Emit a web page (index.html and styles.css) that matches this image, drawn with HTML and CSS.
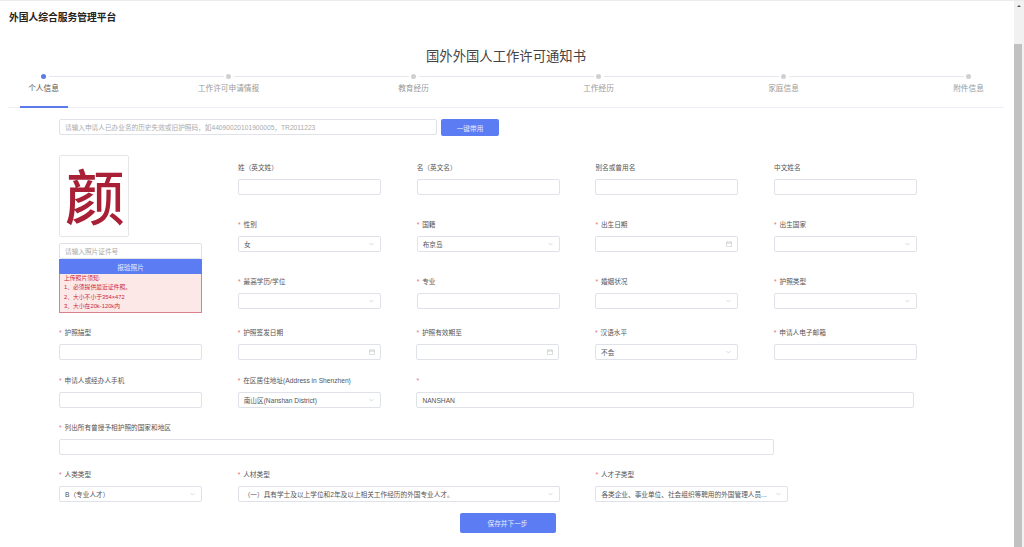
FILE: index.html
```html
<!DOCTYPE html>
<html lang="zh-CN">
<head>
<meta charset="UTF-8">
<meta name="viewport" content="width=device-width, initial-scale=1.0">
<title>外国人综合服务管理平台</title>
<link rel="stylesheet" href="styles.css">
</head>
<body>
<div class="app">
  <div class="page">
    <div class="header">外国人综合服务管理平台</div>
    <h1 class="page-title">国外外国人工作许可通知书</h1>

    <div class="steps">
      <div class="step active"><span class="dot"></span><span class="step-name">个人信息</span></div>
      <div class="step"><span class="dot"></span><span class="step-name">工作许可申请情报</span></div>
      <div class="step"><span class="dot"></span><span class="step-name">教育经历</span></div>
      <div class="step"><span class="dot"></span><span class="step-name">工作经历</span></div>
      <div class="step"><span class="dot"></span><span class="step-name">家庭信息</span></div>
      <div class="step"><span class="dot"></span><span class="step-name">附件信息</span></div>
    </div>

    <div class="form">
      <div class="search-row">
        <input class="input search-input" placeholder="请输入申请人已办业务的历史失效或旧护照码，如44090020101900005，TR2011223">
        <button class="btn btn-small">一键带用</button>
      </div>

      <div class="top-row">
        <div class="photo-col">
          <div class="photo"><span class="photo-char">颜</span></div>
          <input class="input photo-input" placeholder="请输入照片证件号">
          <button class="btn upload-btn">报验照片</button>
          <div class="notice">
            <div>上传照片须知:</div>
            <div>1、必须提供最近证件照。</div>
            <div>2、大小不小于354×472</div>
            <div>3、大小在20k-120k内</div>
          </div>
        </div>

        <div class="top-fields">
          <div class="field"><label class="label">姓（英文姓）</label><input class="input"></div>
          <div class="field"><label class="label">名（英文名）</label><input class="input"></div>
          <div class="field"><label class="label">别名或曾用名</label><input class="input"></div>
          <div class="field"><label class="label">中文姓名</label><input class="input"></div>

          <div class="field"><label class="label req">性别</label>
            <div class="input select"><span class="value">女</span><svg class="chevron" viewBox="0 0 6 4"><path d="M.5.7 3 3.3 5.5.7"/></svg></div></div>
          <div class="field"><label class="label req">国籍</label>
            <div class="input select"><span class="value">布京岛</span><svg class="chevron" viewBox="0 0 6 4"><path d="M.5.7 3 3.3 5.5.7"/></svg></div></div>
          <div class="field"><label class="label req">出生日期</label>
            <div class="input select"><span class="value"></span><svg class="calendar" viewBox="0 0 7 7"><path d="M.5 1.2h6v5.3h-6zM.5 2.6h6M2 .3v1.4M5 .3v1.4"/></svg></div></div>
          <div class="field"><label class="label req">出生国家</label>
            <div class="input select"><span class="value"></span><svg class="chevron" viewBox="0 0 6 4"><path d="M.5.7 3 3.3 5.5.7"/></svg></div></div>

          <div class="field"><label class="label req">最高学历/学位</label>
            <div class="input select"><span class="value"></span><svg class="chevron" viewBox="0 0 6 4"><path d="M.5.7 3 3.3 5.5.7"/></svg></div></div>
          <div class="field"><label class="label req">专业</label><input class="input"></div>
          <div class="field"><label class="label req">婚姻状况</label>
            <div class="input select"><span class="value"></span><svg class="chevron" viewBox="0 0 6 4"><path d="M.5.7 3 3.3 5.5.7"/></svg></div></div>
          <div class="field"><label class="label req">护照类型</label>
            <div class="input select"><span class="value"></span><svg class="chevron" viewBox="0 0 6 4"><path d="M.5.7 3 3.3 5.5.7"/></svg></div></div>
        </div>
      </div>

      <div class="form-row row-4">
        <div class="field"><label class="label req">护照描型</label><input class="input"></div>
        <div class="field"><label class="label req">护照签发日期</label>
          <div class="input select"><span class="value"></span><svg class="calendar" viewBox="0 0 7 7"><path d="M.5 1.2h6v5.3h-6zM.5 2.6h6M2 .3v1.4M5 .3v1.4"/></svg></div></div>
        <div class="field"><label class="label req">护照有效期至</label>
          <div class="input select"><span class="value"></span><svg class="calendar" viewBox="0 0 7 7"><path d="M.5 1.2h6v5.3h-6zM.5 2.6h6M2 .3v1.4M5 .3v1.4"/></svg></div></div>
        <div class="field"><label class="label req">汉语水平</label>
          <div class="input select"><span class="value">不会</span><svg class="chevron" viewBox="0 0 6 4"><path d="M.5.7 3 3.3 5.5.7"/></svg></div></div>
        <div class="field"><label class="label req">申请人电子邮箱</label><input class="input"></div>
      </div>

      <div class="form-row row-5">
        <div class="field"><label class="label req">申请人或经办人手机</label><input class="input"></div>
        <div class="field"><label class="label req">在区居住地址(Address in Shenzhen)</label>
          <div class="input select"><span class="value">南山区(Nanshan District)</span><svg class="chevron" viewBox="0 0 6 4"><path d="M.5.7 3 3.3 5.5.7"/></svg></div></div>
        <div class="field field-address"><label class="label req"></label><input class="input" value="NANSHAN"></div>
      </div>

      <div class="form-row row-6">
        <div class="field field-full"><label class="label req">列出所有曾授予相护照的国家和地区</label><input class="input"></div>
      </div>

      <div class="form-row row-7">
        <div class="field"><label class="label req">人类类型</label>
          <div class="input select"><span class="value">B（专业人才）</span><svg class="chevron" viewBox="0 0 6 4"><path d="M.5.7 3 3.3 5.5.7"/></svg></div></div>
        <div class="field field-talent"><label class="label req">人材类型</label>
          <div class="input select"><span class="value">（一）具有学士及以上学位和2年及以上相关工作经历的外国专业人才。</span><svg class="chevron" viewBox="0 0 6 4"><path d="M.5.7 3 3.3 5.5.7"/></svg></div></div>
        <div class="field field-sub"><label class="label req">人才子类型</label>
          <div class="input select"><span class="value">各类企业、事业单位、社会组织等聘用的外国管理人员...</span><svg class="chevron" viewBox="0 0 6 4"><path d="M.5.7 3 3.3 5.5.7"/></svg></div></div>
      </div>

      <div class="save-row"><button class="btn save-btn">保存并下一步</button></div>
    </div>
  </div>

  <div class="scrollbar">
    <span class="arrow-up"></span>
    <div class="thumb"></div>
  </div>
</div>
</body>
</html>
```

FILE: styles.css
```css
* {
  box-sizing: border-box;
}

body {
  margin: 0;
  font-family: "Liberation Sans", "Noto Sans CJK SC", sans-serif;
  background: #fff;
  color: #606266;
}

.app {
  display: flex;
  height: 547px;
  overflow: hidden;
  border-top: 1px solid #ececec;
}

.page {
  flex: 1;
  min-width: 0;
  padding: 0 10px 0 8px;
}

.header {
  height: 33px;
  padding: 10px 1px 0;
  line-height: 13px;
  font-size: 9.75px;
  font-weight: bold;
  color: #222;
}

.page-title {
  margin: 12px 0 0;
  height: 28px;
  line-height: 21px;
  text-align: center;
  font-size: 13.33px;
  font-weight: normal;
  color: #444;
}

/* steps */
.steps {
  display: flex;
  justify-content: space-between;
  height: 34px;
  padding: 0 11.5px;
  border-bottom: 1px solid #ebeef5;
}

.step {
  position: relative;
  display: flex;
  flex-direction: column;
  align-items: center;
  width: 48px;
  height: 34px;
  color: #999;
}

.step:not(:last-child)::after {
  content: "";
  position: absolute;
  top: 2px;
  left: 29px;
  width: 175px;
  height: 1px;
  background: #e4e7ed;
}

.dot {
  width: 5px;
  height: 5px;
  border-radius: 50%;
  background: #d0d0d0;
}

.step-name {
  margin-top: 4px;
  line-height: 11px;
  font-size: 7.67px;
  white-space: nowrap;
}

.step.active {
  border-bottom: 2px solid #5b7bea;
  color: #555;
}

.step.active .dot {
  background: #5b7bea;
}

/* form */
.form {
  padding: 11px 0 0 51px;
}

.input {
  display: block;
  width: 100%;
  height: 16px;
  padding: 0 5px;
  border: 1px solid #dfe2e8;
  border-radius: 2px;
  background: #fff;
  outline: none;
  font-family: inherit;
  font-size: 6.67px;
  color: #555;
}

.input::placeholder {
  color: #aaa;
}

.select {
  display: flex;
  align-items: center;
  justify-content: space-between;
  gap: 4px;
}

.value {
  flex: 1;
  min-width: 0;
  overflow: hidden;
  white-space: nowrap;
}

.chevron {
  flex: none;
  width: 5px;
  height: 4px;
  margin-right: 1px;
  fill: none;
  stroke: #bbb;
  stroke-width: .6;
}

.calendar {
  flex: none;
  width: 6px;
  height: 6px;
  fill: none;
  stroke: #bbb;
  stroke-width: .6;
}

.btn {
  border: 0;
  border-radius: 2px;
  padding: 0;
  background: #5b7cf2;
  color: #e8ecfd;
  font-family: inherit;
  font-size: 6.67px;
}

.search-row {
  display: flex;
  gap: 4px;
}

.search-input {
  width: 378px;
}

.btn-small {
  width: 58px;
  height: 17px;
}

.top-row {
  display: flex;
  gap: 36px;
  margin-top: 19px;
}

.photo-col {
  flex: none;
  display: flex;
  flex-direction: column;
  width: 143px;
}

.photo {
  display: flex;
  justify-content: center;
  width: 70px;
  height: 82px;
  padding: 8px 0 0 2px;
  border: 1px solid #e6e6e6;
  border-radius: 2px;
}

.photo-char {
  font-family: "Noto Sans CJK SC", sans-serif;
  font-size: 60px;
  font-weight: 500;
  line-height: 1;
  color: #a81f36;
}

.photo-input {
  margin-top: 6px;
}

.upload-btn {
  width: 100%;
  height: 15px;
  border-radius: 0;
}

.notice {
  height: 39px;
  padding: 0 4px;
  border: 1px solid #d9808c;
  border-top: 0;
  background: #fde8e8;
  font-size: 5.8px;
  line-height: 9.4px;
  color: #c8283c;
}

.top-fields {
  display: grid;
  grid-template-columns: repeat(4, 143px);
  column-gap: 35.7px;
  row-gap: 24px;
  align-content: start;
  padding-top: 7px;
}

.field {
  display: flex;
  flex-direction: column;
  width: 143px;
}

.label {
  height: 12px;
  margin-bottom: 5px;
  line-height: 12px;
  font-size: 6.67px;
  white-space: nowrap;
  color: #555;
}

.req::before {
  content: "*";
  display: inline-block;
  width: 5.5px;
  color: #e8707a;
}

.form-row {
  display: flex;
  gap: 35.7px;
}

.row-4 {
  margin-top: 14px;
}

.row-5 {
  margin-top: 15px;
}

.row-6,
.row-7 {
  margin-top: 14px;
}

.field-address {
  width: 498px;
}

.field-full {
  width: 715px;
}

.field-talent {
  width: 322px;
}

.field-sub {
  width: 193px;
}

.save-row {
  display: flex;
  justify-content: center;
  margin-top: 11px;
  padding-right: 48px;
}

.save-btn {
  width: 96px;
  height: 20px;
}

/* scrollbar */
.scrollbar {
  flex: none;
  display: flex;
  flex-direction: column;
  align-items: center;
  width: 10px;
  background: #f1f1f1;
}

.arrow-up {
  flex: none;
  width: 0;
  height: 0;
  margin: 4px 0;
  border-left: 2px solid transparent;
  border-right: 2px solid transparent;
  border-bottom: 2px solid #555;
}

.thumb {
  flex: 1;
  align-self: flex-start;
  width: 8px;
  margin-top: 33px;
  background: #c1c1c1;
}
```
